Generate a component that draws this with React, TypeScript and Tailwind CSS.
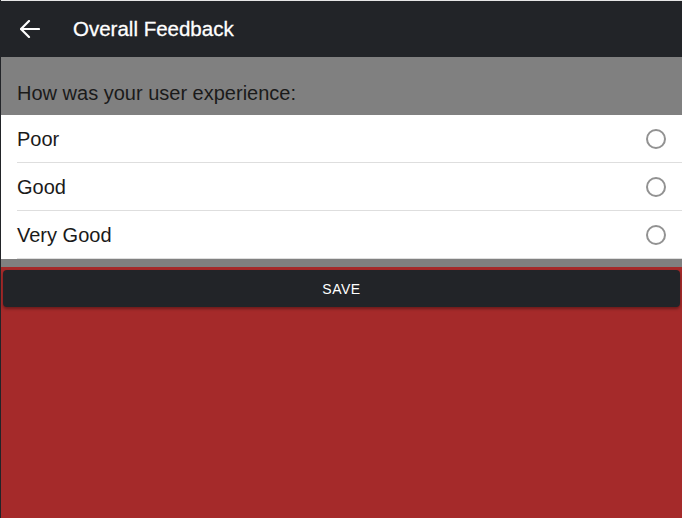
const OPTIONS = ["Poor", "Good", "Very Good"];

export default function App() {
  return (
    <div
      className="w-[682px] h-[518px] flex flex-col bg-[#a52a2a] border-l border-[#222428] overflow-hidden"
      style={{ fontFamily: '"Liberation Sans", Arial, sans-serif' }}
    >
      <div className="h-[1px] bg-[#e6e6e6]" />
      <header className="h-[56px] shrink-0 flex items-center bg-[#222428] text-white">
        <div className="w-[72px] flex items-center pl-[19px]">
          <svg width="20" height="18" viewBox="0 0 20 18" fill="none" stroke="white" strokeWidth="2.2" strokeLinecap="round" strokeLinejoin="round">
            <path d="M9 1 1 9l8 8" />
            <path d="M1.5 9H19" />
          </svg>
        </div>
        <h1 className="text-[20.5px] font-normal [-webkit-text-stroke:0.3px_white]">Overall Feedback</h1>
      </header>

      <div className="bg-[#808080]">
        <p className="pt-[22px] pb-[8px] pl-[16px] text-[20px] leading-[28px] text-[#1a1a1a]">
          How was your user experience:
        </p>
        <ul className="bg-white">
          {OPTIONS.map((opt) => (
            <li key={opt} className="pl-[16px]">
              <div className="h-[48px] flex items-center justify-between pr-[16px] border-b border-[#dedede]">
                <span className="text-[20px] text-[#1a1a1a]">{opt}</span>
                <span className="w-[20px] h-[20px] rounded-full border-2 border-[#929292]" />
              </div>
            </li>
          ))}
        </ul>
        <div className="h-[8px]" />
      </div>

      <div className="px-[2px] pt-[3px]">
        <button className="w-full h-[37px] rounded-[4px] bg-[#222428] text-white text-[14px] font-medium tracking-[0.5px] pt-[1px] shadow-[0_2px_3px_rgba(0,0,0,0.35)]">
          SAVE
        </button>
      </div>
    </div>
  );
}
